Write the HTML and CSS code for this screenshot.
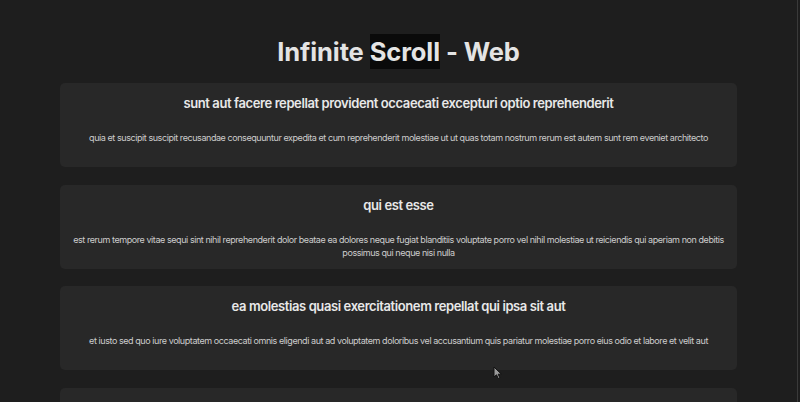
FILE: index.html
```html
<!DOCTYPE html>
<html lang="en">
<head>
<meta charset="utf-8">
<title>Infinite Scroll - Web</title>
<link rel="stylesheet" href="styles.css">
</head>
<body>
<div class="window">
  <h1 class="heading">Infinite <span class="selected">Scroll</span> - Web</h1>
  <div class="list">
    <div class="card">
      <h2 class="card-title">sunt aut facere repellat provident occaecati excepturi optio reprehenderit</h2>
      <p class="card-body">quia et suscipit suscipit recusandae consequuntur expedita et cum reprehenderit molestiae ut ut quas totam nostrum rerum est autem sunt rem eveniet architecto</p>
    </div>
    <div class="card">
      <h2 class="card-title">qui est esse</h2>
      <p class="card-body">est rerum tempore vitae sequi sint nihil reprehenderit dolor beatae ea dolores neque fugiat blanditiis voluptate porro vel nihil molestiae ut reiciendis qui aperiam non debitis possimus qui neque nisi nulla</p>
    </div>
    <div class="card">
      <h2 class="card-title">ea molestias quasi exercitationem repellat qui ipsa sit aut</h2>
      <p class="card-body">et iusto sed quo iure voluptatem occaecati omnis eligendi aut ad voluptatem doloribus vel accusantium quis pariatur molestiae porro eius odio et labore et velit aut</p>
    </div>
    <div class="card">
      <h2 class="card-title">eum et est occaecati</h2>
      <p class="card-body">ullam et saepe reiciendis voluptatem adipisci sit amet autem assumenda provident rerum culpa quis hic commodi nesciunt rem tenetur doloremque ipsam iure quis sunt voluptatem rerum illo velit</p>
    </div>
  </div>
  <svg class="cursor" width="10" height="14" viewBox="0 0 10 14"><path d="M1 1 L1 11 L3.5 8.8 L5.3 12.6 L6.9 11.9 L5.2 8.2 L8.4 8.2 Z" fill="#9a9a9a" stroke="#111" stroke-width="1"/></svg>
</div>
</body>
</html>
```

FILE: styles.css
```css
html, body {
  margin: 0;
  padding: 0;
  background: #1e1e1e;
  overflow: hidden;
}
.window {
  position: relative;
  width: 797px;
  height: 402px;
  border-right: 1px solid #3a3a3a;
  font-family: Inter, "Noto Sans", sans-serif;
  overflow: hidden;
}
.heading {
  margin: 34px 0 14px;
  font-size: 25.5px;
  line-height: 35px;
  font-weight: 700;
  letter-spacing: -0.1px;
  color: #e4e4e4;
  text-align: center;
}
.selected {
  background: #0a0a0a;
  padding: 2px 0;
}
.list {
  display: flex;
  flex-direction: column;
  align-items: center;
  gap: 17.7px;
}
.card {
  box-sizing: border-box;
  width: 677px;
  height: 84px;
  flex: none;
  padding: 11px 12px 0;
  background: #282828;
  border-radius: 5px;
  text-align: center;
}
.card-title {
  margin: 0;
  font-size: 13px;
  line-height: 18px;
  font-weight: 600;
  letter-spacing: -0.4px;
  color: #e8e8e8;
}
.card-body {
  margin: 19px 0 0;
  font-size: 9px;
  line-height: 13px;
  letter-spacing: -0.43px;
  color: #cdcdcd;
}
.cursor {
  position: absolute;
  left: 493px;
  top: 366px;
}
```
